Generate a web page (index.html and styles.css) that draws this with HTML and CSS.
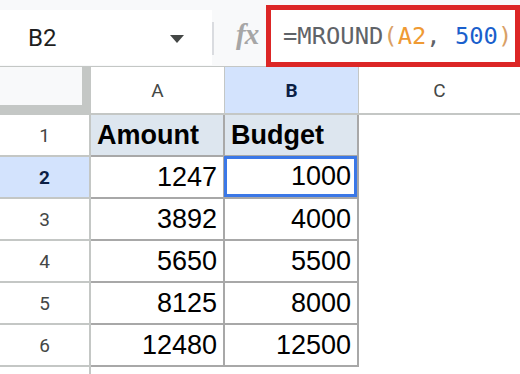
FILE: index.html
```html
<!DOCTYPE html>
<html lang="en">
<head>
    <meta charset="UTF-8">
    <meta name="viewport" content="width=device-width, initial-scale=1.0">
    <title>MROUND - Sheet</title>
    <link rel="stylesheet" href="styles.css">
</head>
<body>
    <div class="topbar">
        <div class="namebox">
            <span class="cell-ref">B2</span>
            <span class="caret"></span>
        </div>
        <div class="divider"></div>
        <div class="fx">fx</div>
        <div class="formula">
            <span class="op">=MROUND</span><span class="paren">(</span><span class="ref">A2</span><span class="op">, </span><span class="num">500</span><span class="paren">)</span>
        </div>
    </div>

    <div class="sheet">
        <!-- column headers -->
        <div class="corner"><div class="corner-inner"></div></div>
        <div class="col-head">A</div>
        <div class="col-head active">B</div>
        <div class="col-head last">C</div>

        <div class="row-head">1</div>
        <div class="cell title">Amount</div>
        <div class="cell title">Budget</div>
        <div class="blank"></div>

        <div class="row-head active">2</div>
        <div class="cell num">1247</div>
        <div class="cell num selected">1000</div>
        <div class="blank"></div>

        <div class="row-head">3</div>
        <div class="cell num">3892</div>
        <div class="cell num">4000</div>
        <div class="blank"></div>

        <div class="row-head">4</div>
        <div class="cell num">5650</div>
        <div class="cell num">5500</div>
        <div class="blank"></div>

        <div class="row-head">5</div>
        <div class="cell num">8125</div>
        <div class="cell num">8000</div>
        <div class="blank"></div>

        <div class="row-head">6</div>
        <div class="cell num">12480</div>
        <div class="cell num">12500</div>
        <div class="blank"></div>

        <!-- next row, only its top edge is in view -->
        <div class="row-head"></div>
        <div class="blank"></div>
        <div class="blank"></div>
        <div class="blank"></div>
    </div>
</body>
</html>
```

FILE: styles.css
```css
* {
    margin: 0;
    padding: 0;
    box-sizing: border-box;
}

body {
    width: 520px;
    height: 374px;
    overflow: hidden;
    background: #ffffff;
    font-family: 'Liberation Sans', Arial, sans-serif;
}

/* formula bar */
.topbar {
    display: flex;
    align-items: flex-start;
    height: 67px;
    background: #f8f9fa;
    border-bottom: 1px solid #c4c7c5;
}

.namebox {
    display: flex;
    align-items: center;
    width: 212px;
    height: 55px;
    margin-top: 10px;
    background: #ffffff;
    padding-left: 28px;
}

.cell-ref {
    font-family: Roboto, 'Liberation Sans', sans-serif;
    font-size: 24px;
    color: #1f1f1f;
}

.caret {
    margin-left: 114px;
    margin-top: 2px;
    width: 0;
    height: 0;
    border-left: 7.5px solid transparent;
    border-right: 7.5px solid transparent;
    border-top: 8px solid #444746;
}

.divider {
    width: 2px;
    height: 33px;
    margin-top: 22px;
    background: #dadce0;
}

.fx {
    width: 52px;
    padding-left: 22px;
    margin-top: 18px;
    font-family: 'Liberation Serif', 'DejaVu Serif', serif;
    font-style: italic;
    font-weight: bold;
    font-size: 29px;
    color: #a6a6a6;
    letter-spacing: -1px;
}

.formula {
    flex: 1;
    height: 62px;
    margin-top: 5px;
    border: 5px solid #dc2626;
    background: #ffffff;
    padding-left: 12px;
    display: flex;
    align-items: center;
    font-family: 'DejaVu Sans Mono', 'Liberation Mono', monospace;
    font-size: 23.8px;
    white-space: pre;
}

.formula .op { color: #5f6368; }
.formula .paren { color: #d9a066; }
.formula .ref { color: #ef9a34; }
.formula .num { color: #1a5fcc; }

/* grid */
.sheet {
    display: grid;
    grid-template-columns: 91px 134px 134px 1fr;
    grid-template-rows: 48px repeat(7, 42px);
}

.corner {
    background: #c4c7c5;
    border-right: 1px solid #c4c7c5;
    border-bottom: 1px solid #c4c7c5;
}

.corner-inner {
    width: 82px;
    height: 38px;
    background: #f8f9fa;
}

.col-head {
    display: flex;
    align-items: center;
    justify-content: center;
    font-family: Roboto, 'Liberation Sans', sans-serif;
    font-size: 19px;
    color: #444746;
    background: #ffffff;
    border-right: 1px solid #c4c7c5;
    border-bottom: 2px solid #c4c7c5;
}

.col-head.active {
    background: #d3e3fd;
    color: #0b1f45;
    font-weight: bold;
}

.col-head.last {
    border-right: none;
}

.row-head {
    display: flex;
    align-items: center;
    justify-content: center;
    font-family: Roboto, 'Liberation Sans', sans-serif;
    font-size: 19px;
    color: #444746;
    border-right: 2px solid #c4c7c5;
    border-bottom: 2px solid #c4c7c5;
}

.row-head.active {
    background: #d3e3fd;
    color: #0b1f45;
    font-weight: bold;
}

.cell {
    display: flex;
    align-items: center;
    padding: 0 6px;
    font-size: 27px;
    color: #000000;
    border-right: 2px solid #a8a8a8;
    border-bottom: 2px solid #a8a8a8;
}

.cell.title {
    background: #dde6ef;
    font-weight: bold;
}

.cell.num {
    justify-content: flex-end;
}

.cell.selected {
    box-shadow: inset 0 0 0 3px #3b78e7;
    margin: -1px 0 0 -1px;
}

.blank {
    background: #ffffff;
}
```
